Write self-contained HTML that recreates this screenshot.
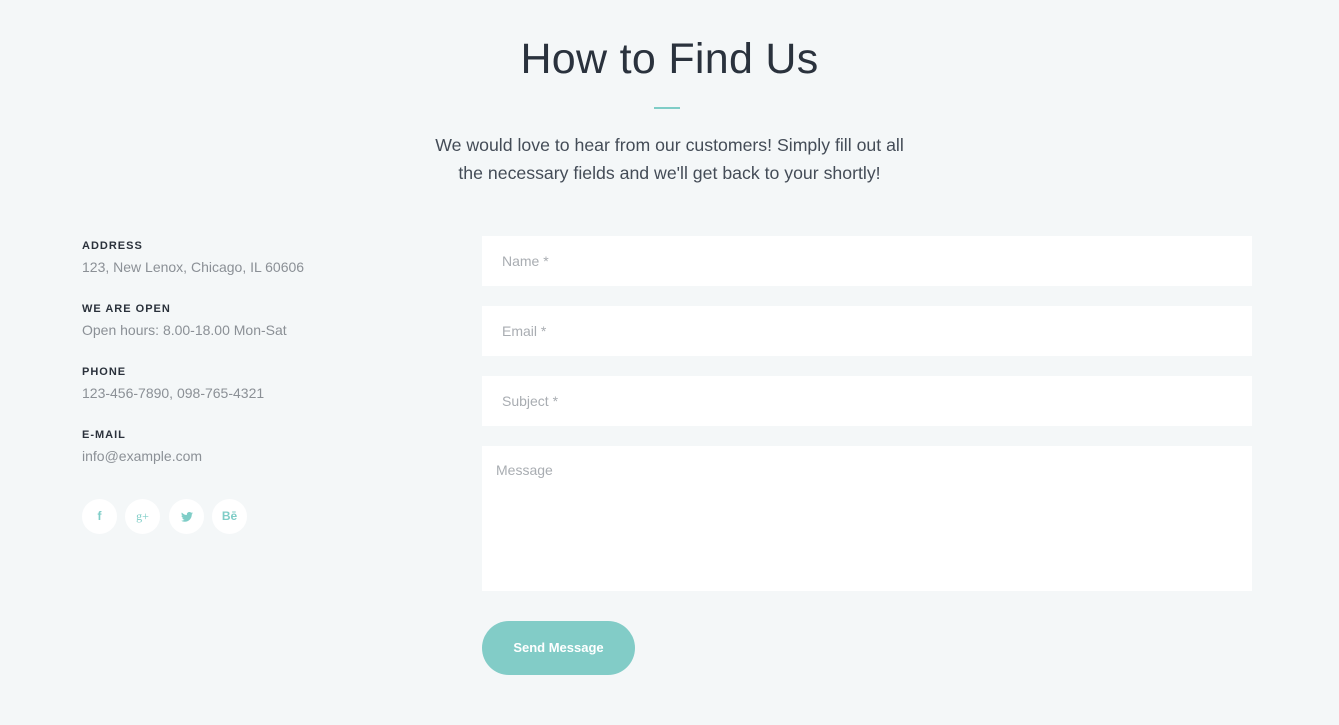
<!DOCTYPE html>
<html><head><meta charset="utf-8"><style>
*{margin:0;padding:0;box-sizing:border-box}
body{width:1339px;height:725px;background:#f4f7f8;font-family:"Liberation Sans",sans-serif;position:relative;overflow:hidden;color:#222b36}
h1{position:absolute;top:35px;left:0;width:1339px;text-align:center;font-weight:300;font-size:43px;color:#2a323d;letter-spacing:0.3px}
.bar{position:absolute;left:654px;top:107px;width:26px;height:2px;background:#7fcdc7}
.sub{position:absolute;top:131px;left:0;width:1339px;text-align:center;font-size:17.7px;line-height:28px;color:#444c57}
.info{position:absolute;left:82px}
.info b{display:block;font-size:11px;letter-spacing:1px;color:#2a313b;font-weight:bold}
.info span{display:block;font-size:14px;color:#8b9096;margin-top:7px}
.soc{position:absolute;top:499px;width:35px;height:35px;border-radius:50%;background:#fff;color:#7fcdc7;font-size:12px;font-weight:bold;text-align:center;line-height:35px}
.f{position:absolute;left:482px;width:770px;background:#fff;font-size:14px;color:#a9adb2;padding-left:20px}
.btn{position:absolute;left:482px;top:621px;width:153px;height:54px;border-radius:27px;background:#82ccc7;color:#fff;font-weight:bold;font-size:13px;text-align:center;line-height:54px}
</style></head><body>
<h1>How to Find Us</h1>
<div class="bar"></div>
<div class="sub">We would love to hear from our customers! Simply fill out all<br>the necessary fields and we'll get back to your shortly!</div>
<div class="info" style="top:240px"><b>ADDRESS</b><span>123, New Lenox, Chicago, IL 60606</span></div>
<div class="info" style="top:303px"><b>WE ARE OPEN</b><span>Open hours: 8.00-18.00 Mon-Sat</span></div>
<div class="info" style="top:366px"><b>PHONE</b><span>123-456-7890, 098-765-4321</span></div>
<div class="info" style="top:429px"><b>E-MAIL</b><span>info@example.com</span></div>
<div class="soc" style="left:82px">f</div>
<div class="soc" style="left:125px;font-family:'Liberation Serif',serif;font-weight:normal">g+</div>
<div class="soc" style="left:169px"><svg width="12" height="10" viewBox="0 0 24 20" style="vertical-align:middle"><path fill="#7fcdc7" d="M24 2.4a10 10 0 0 1-2.8.8A5 5 0 0 0 23.3.4a10 10 0 0 1-3.1 1.2A4.9 4.9 0 0 0 11.8 6 14 14 0 0 1 1.7.9a4.9 4.9 0 0 0 1.5 6.6A4.9 4.9 0 0 1 1 6.9 4.9 4.9 0 0 0 4.9 11.8a5 5 0 0 1-2.2.1 4.9 4.9 0 0 0 4.6 3.4A9.9 9.9 0 0 1 0 17.3 14 14 0 0 0 7.5 19.5c9 0 14-7.5 14-14v-.6A10 10 0 0 0 24 2.4z"/></svg></div>
<div class="soc" style="left:212px">Bē</div>
<div class="f" style="top:236px;height:50px;line-height:50px">Name *</div>
<div class="f" style="top:306px;height:50px;line-height:50px">Email *</div>
<div class="f" style="top:376px;height:50px;line-height:50px">Subject *</div>
<div class="f" style="top:446px;height:145px;padding:16px 14px">Message</div>
<div class="btn">Send Message</div>
</body></html>
